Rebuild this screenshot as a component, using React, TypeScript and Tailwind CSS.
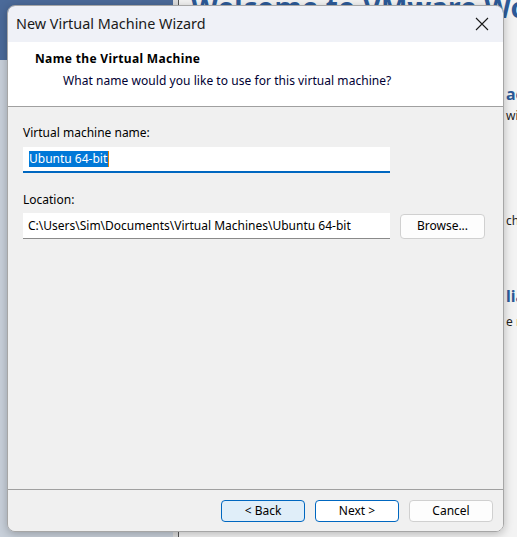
import React from 'react';

const font = { fontFamily: '"Noto Sans", "Open Sans", sans-serif' };

function WizardButton({ label, variant }: { label: string; variant: 'focus' | 'primary' | 'plain' }) {
  const cls =
    variant === 'focus'
      ? 'bg-[#e0eef9] border-[#0067c0]'
      : variant === 'primary'
        ? 'bg-white border-[#0067c0]'
        : 'bg-[#fdfdfd] border-[#d0d0d0]';
  return (
    <button
      className={`w-[84px] h-[22px] rounded-[4px] border text-[12px] leading-none text-black flex items-center justify-center ${cls}`}
    >
      {label}
    </button>
  );
}

export default function App() {
  return (
    <div className="relative w-[517px] h-[537px] overflow-hidden bg-[#f3f3f3]" style={font}>
      {/* desktop / app behind the dialog */}
      <div className="flex h-full">
        <div className="w-[173px] flex flex-col">
          <div className="h-[60px] bg-[#4b6a99]" />
          <div className="flex-1 bg-[#c8d0da]" />
        </div>
        <div className="w-[5px] bg-[#dedede]" />
        <div className="w-px bg-[#555]" />
        <div className="flex-1 relative bg-[#f3f3f3]">
          <div className="absolute left-[12px] top-[-14px] whitespace-nowrap text-[28px] font-bold text-[#2c5a98]">
            Welcome to VMware Workstation
          </div>
          <div className="absolute left-[327px] top-[84px] flex flex-col text-[#222]">
            <span className="text-[16px] font-bold text-[#2c5a98] leading-[20px]">ac</span>
            <span className="text-[12px] leading-[16px] mt-[4px]">wi</span>
            <span className="text-[12px] leading-[16px] mt-[89px]">ch</span>
            <span className="text-[16px] font-bold text-[#2c5a98] leading-[20px] mt-[57px]">lia</span>
            <span className="text-[12px] leading-[16px] mt-[8px]">e n</span>
          </div>
        </div>
      </div>

      {/* dialog window */}
      <div className="absolute left-[7px] top-[5px] w-[497px] h-[527px] rounded-[8px] border border-[#a6a6a6] overflow-hidden flex flex-col shadow-[0_2px_10px_rgba(0,0,0,0.25)]">
        <div className="h-[36px] bg-[#eff1f7] flex items-center justify-between pl-[8px] pr-[14px] pb-px">
          <span className="text-[14.4px] text-[#1a1a1a]">New Virtual Machine Wizard</span>
          <svg width="14" height="14" viewBox="0 0 14 14" className="text-[#1a1a1a]">
            <path d="M1 1 L13 13 M13 1 L1 13" stroke="currentColor" strokeWidth="1.1" fill="none" />
          </svg>
        </div>

        <div className="h-[65px] bg-white border-b border-[#a0a0a0] flex flex-col pt-[9px]">
          <div className="pl-[27px] text-[12px] font-bold tracking-[0.35px] text-black leading-[16px]">
            Name the Virtual Machine
          </div>
          <div className="pl-[55px] mt-[6px] text-[12px] tracking-[0.05px] text-[#000033] leading-[16px]">
            What name would you like to use for this virtual machine?
          </div>
        </div>

        <div className="flex-1 bg-[#f0f0f0] flex flex-col px-[15px] pt-[18px]">
          <label className="text-[12px] leading-[16px] text-black">Virtual machine name:</label>
          <div className="mt-[6px] w-[367px] h-[26px] bg-white border-b-2 border-[#0067c0] flex items-center px-[6px]">
            <span className="bg-[#0078d7] text-white text-[12px] leading-[16px] pr-px">Ubuntu 64-bit</span>
            <span className="w-px h-[16px] bg-[#e08000]" />
          </div>

          <label className="mt-[19px] text-[12px] leading-[16px] text-black">Location:</label>
          <div className="mt-[5px] flex items-center gap-[10px]">
            <div className="w-[367px] h-[26px] bg-white border-b border-[#8a8a8a] flex items-center px-[5px] text-[12px] text-black">
              C:\Users\Sim\Documents\Virtual Machines\Ubuntu 64-bit
            </div>
            <button className="w-[85px] h-[25px] bg-[#fdfdfd] border border-[#d0d0d0] rounded-[4px] text-[12px] text-black">
              Browse...
            </button>
          </div>
        </div>

        <div className="h-[42px] bg-[#f0f0f0] border-t border-[#a0a0a0] flex justify-end items-start gap-[10px] pt-[10px] pr-[10px]">
          <WizardButton label="< Back" variant="focus" />
          <WizardButton label="Next >" variant="primary" />
          <WizardButton label="Cancel" variant="plain" />
        </div>
      </div>
    </div>
  );
}
